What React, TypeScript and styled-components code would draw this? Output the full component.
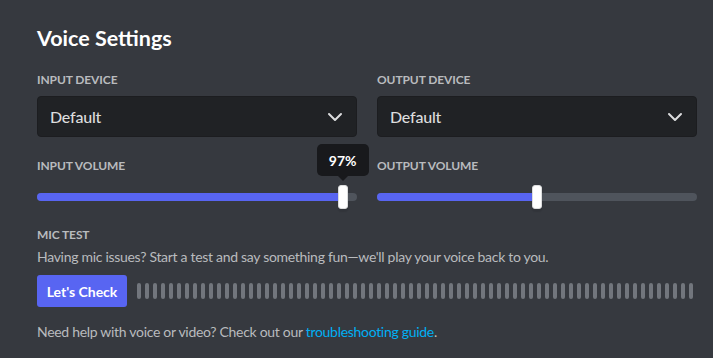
import styled, { createGlobalStyle } from 'styled-components';

const Global = createGlobalStyle`
  html, body { margin: 0; padding: 0; background: #36393f; }
  body { font-family: Lato, "Noto Sans", sans-serif; -webkit-font-smoothing: antialiased; }
`;

const Page = styled.div`
  width: 713px; height: 358px; box-sizing: border-box;
  padding: 25px 16px 0 37px; background: #36393f; overflow: hidden;
`;
const Title = styled.h2`
  margin: 0 0 21px; font-size: 21.5px; line-height: 26px; font-weight: 700; color: #fff;
`;
const Columns = styled.div<{ $gap?: number }>`
  display: grid; grid-template-columns: 320px 320px; column-gap: 20px;
  margin-bottom: ${({ $gap }) => $gap ?? 0}px;
`;
const Label = styled.div<{ $mb?: number }>`
  font-size: 12px; line-height: 16px; font-weight: 700; text-transform: uppercase;
  color: #b9bbbe; letter-spacing: -0.1px; margin-bottom: ${({ $mb }) => $mb ?? 8}px;
`;
const Select = styled.div`
  height: 41px; box-sizing: border-box; display: flex; align-items: center; justify-content: space-between;
  padding: 0 13px 0 12px; background: #202225; border: 1px solid #1c1d20; border-radius: 4px;
  font-size: 16px; color: #dcddde; font-weight: 500; letter-spacing: -0.2px;
`;
const SliderBox = styled.div`position: relative; height: 24px;`;
const Track = styled.div`
  position: absolute; left: 0; right: 0; top: 8px; height: 8px; border-radius: 4px; background: #4f545c; overflow: hidden;
`;
const Fill = styled.div`height: 100%; background: #5865f2;`;
const Knob = styled.div`
  position: absolute; top: 0; width: 10px; height: 24px; box-sizing: border-box;
  background: #fff; border: 1px solid #dcddde; border-radius: 3px; box-shadow: 0 3px 1px rgba(0,0,0,0.08);
`;
const Tip = styled.div`
  position: absolute; bottom: 32px; left: 50%; transform: translateX(-50%);
  width: 52px; height: 32px; background: #18191c; border-radius: 5px;
  display: flex; align-items: center; justify-content: center;
  font-size: 14px; font-weight: 700; color: #fff;
  &::after {
    content: ''; position: absolute; top: 100%; left: 50%; margin-left: -5px;
    border: 5px solid transparent; border-top-color: #18191c;
  }
`;
const Text = styled.p<{ $mb?: number }>`
  margin: 0 0 ${({ $mb }) => $mb ?? 0}px; font-size: 14px; line-height: 18px; color: #b9bbbe;
  letter-spacing: -0.3px;
`;
const Link = styled.a`color: #00aff4; text-decoration: none;`;
const TestRow = styled.div`display: flex; align-items: center; gap: 10px; margin-bottom: 16px;`;
const Button = styled.button`
  width: 90px; height: 32px; border: none; border-radius: 3px; background: #5865f2; color: #fff;
  font-family: inherit; font-size: 14px; font-weight: 700; padding: 0; cursor: pointer;
`;
const Bars = styled.div`display: flex; gap: 4px;`;
const Bar = styled.div`width: 4px; height: 16px; border-radius: 2px; background: #72767d;`;

function Chevron() {
  return (
    <svg width="16" height="10" viewBox="0 0 16 10" fill="none">
      <path d="M2 2L8 8L14 2" stroke="#dcddde" strokeWidth="2" strokeLinecap="round" strokeLinejoin="round" />
    </svg>
  );
}

function Slider({ value, tip }: { value: number; tip?: boolean }) {
  const left = (value / 100) * 310;
  return (
    <SliderBox>
      <Track><Fill style={{ width: left + 5 }} /></Track>
      <Knob style={{ left }}>{tip && <Tip>{value}%</Tip>}</Knob>
    </SliderBox>
  );
}

export default function App() {
  return (
    <Page>
      <Global />
      <Title>Voice Settings</Title>
      <Columns $gap={21}>
        <div>
          <Label>Input Device</Label>
          <Select>Default<Chevron /></Select>
        </div>
        <div>
          <Label>Output Device</Label>
          <Select>Default<Chevron /></Select>
        </div>
      </Columns>
      <Columns $gap={18}>
        <div>
          <Label $mb={11}>Input Volume</Label>
          <Slider value={97} tip />
        </div>
        <div>
          <Label $mb={11}>Output Volume</Label>
          <Slider value={50} />
        </div>
      </Columns>
      <Label $mb={5}>Mic Test</Label>
      <Text $mb={9}>Having mic issues? Start a test and say something fun—we'll play your voice back to you.</Text>
      <TestRow>
        <Button>Let's Check</Button>
        <Bars>{Array.from({ length: 70 }, (_, i) => <Bar key={i} />)}</Bars>
      </TestRow>
      <Text>Need help with voice or video? Check out our <Link href="#">troubleshooting guide</Link>.</Text>
    </Page>
  );
}
